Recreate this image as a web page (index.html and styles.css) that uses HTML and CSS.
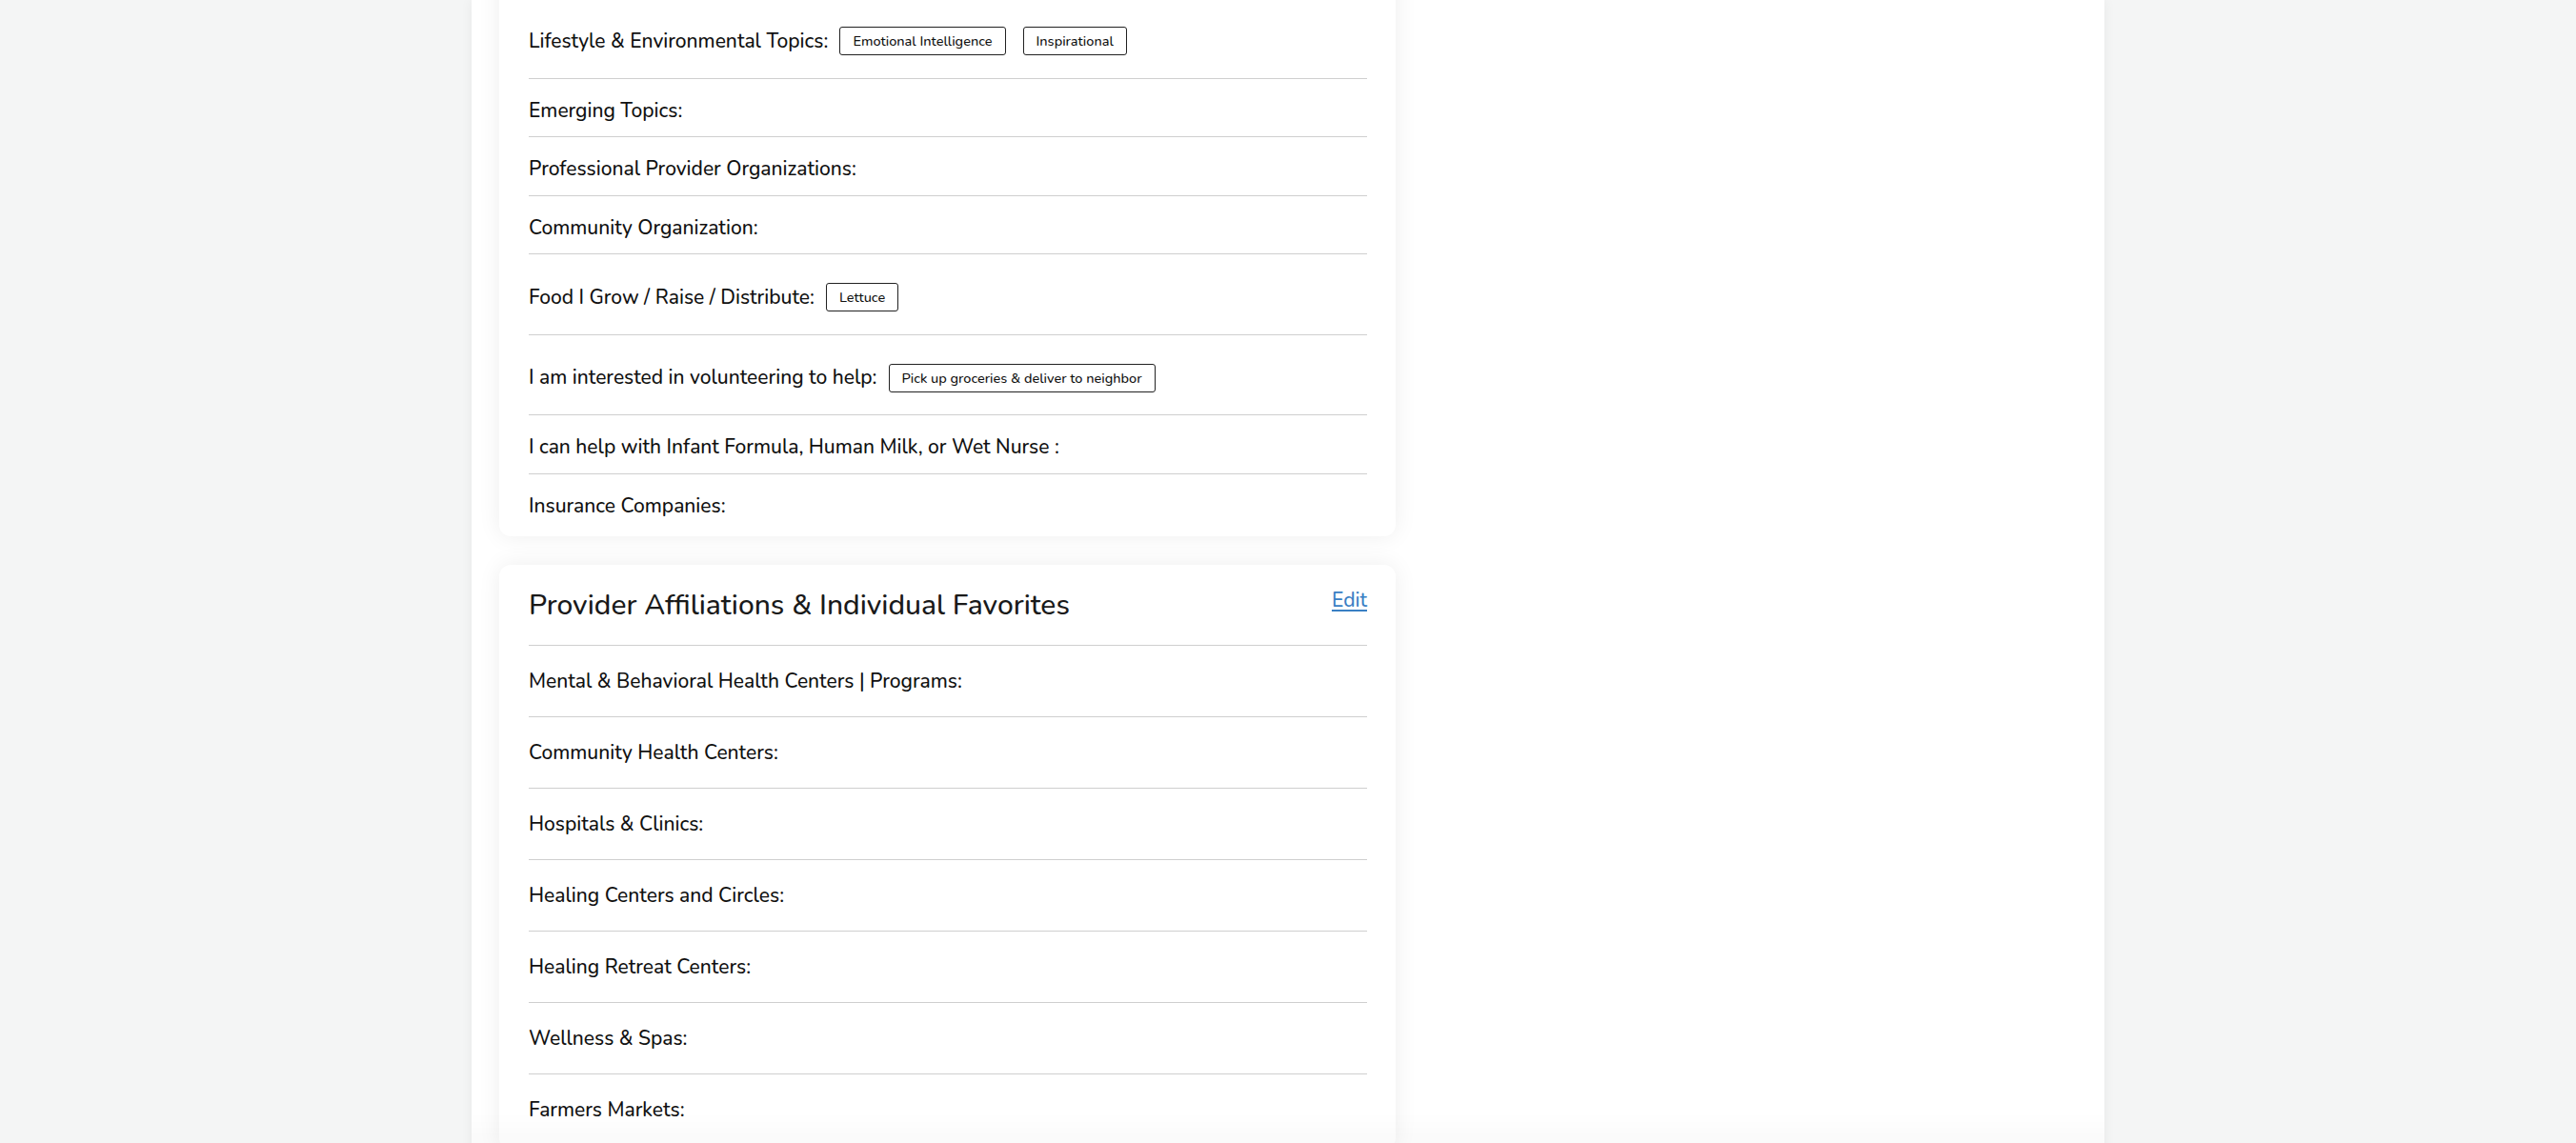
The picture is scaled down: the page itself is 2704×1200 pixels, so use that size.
FILE: index.html
```html
<!DOCTYPE html>
<html lang="en">
<head>
    <meta charset="UTF-8">
    <meta name="viewport" content="width=device-width, initial-scale=1.0">
    <title>Profile - Interests &amp; Affiliations</title>
    <link rel="stylesheet" href="styles.css">
</head>
<body>
    <div class="page">
        <div class="layout">
            <div class="main-col">
                <!-- interests card, upper part scrolled out of view -->
                <section class="card card-continued">
                    <div class="info-row">
                        <span class="info-label">Lifestyle &amp; Environmental Topics:</span>
                        <span class="tag">Emotional Intelligence</span>
                        <span class="tag">Inspirational</span>
                    </div>
                    <div class="info-row">
                        <span class="info-label">Emerging Topics:</span>
                    </div>
                    <div class="info-row">
                        <span class="info-label">Professional Provider Organizations:</span>
                    </div>
                    <div class="info-row">
                        <span class="info-label">Community Organization:</span>
                    </div>
                    <div class="info-row">
                        <span class="info-label">Food I Grow / Raise / Distribute:</span>
                        <span class="tag">Lettuce</span>
                    </div>
                    <div class="info-row">
                        <span class="info-label">I am interested in volunteering to help:</span>
                        <span class="tag">Pick up groceries &amp; deliver to neighbor</span>
                    </div>
                    <div class="info-row">
                        <span class="info-label">I can help with Infant Formula, Human Milk, or Wet Nurse :</span>
                    </div>
                    <div class="info-row">
                        <span class="info-label">Insurance Companies:</span>
                    </div>
                </section>

                <section class="card">
                    <div class="card-header">
                        <h2>Provider Affiliations &amp; Individual Favorites</h2>
                        <a href="#" class="edit-link">Edit</a>
                    </div>
                    <div class="info-row roomy">
                        <span class="info-label">Mental &amp; Behavioral Health Centers | Programs:</span>
                    </div>
                    <div class="info-row roomy">
                        <span class="info-label">Community Health Centers:</span>
                    </div>
                    <div class="info-row roomy">
                        <span class="info-label">Hospitals &amp; Clinics:</span>
                    </div>
                    <div class="info-row roomy">
                        <span class="info-label">Healing Centers and Circles:</span>
                    </div>
                    <div class="info-row roomy">
                        <span class="info-label">Healing Retreat Centers:</span>
                    </div>
                    <div class="info-row roomy">
                        <span class="info-label">Wellness &amp; Spas:</span>
                    </div>
                    <div class="info-row roomy">
                        <span class="info-label">Farmers Markets:</span>
                    </div>
                </section>
            </div>
            <div class="side-col"></div>
        </div>
    </div>
    <div class="bottom-fade"></div>
</body>
</html>
```

FILE: styles.css
```css
body {
    margin: 0;
    background-color: #f4f5f5;
    font-family: "Nunito", "Lato", sans-serif;
    color: #111;
}
.page {
    box-sizing: border-box;
    width: 1714px;
    min-height: 100vh;
    margin: 0 auto;
    padding: 0 29px;
    background-color: #fff;
    box-shadow: 0 0 12px rgba(0, 0, 0, 0.06);
}
.layout {
    display: grid;
    grid-template-columns: 941px 1fr;
}
.card {
    background-color: #fff;
    border-radius: 12px;
    box-shadow: 0 0 24px rgba(0, 0, 0, 0.07);
    padding: 0 30px 5px 31px;
    margin-bottom: 30px;
}
.card-continued {
    margin-top: -40px;
    padding-top: 38px;
}
.card-header {
    display: flex;
    justify-content: space-between;
    align-items: flex-start;
    padding: 24px 0 22px;
    border-bottom: 1px solid #cfcfcf;
}
.card-header h2 {
    margin: 0;
    font-size: 30px;
    line-height: 38px;
    font-weight: 500;
    color: #1a1a1a;
}
.edit-link {
    font-size: 21px;
    line-height: 27px;
    font-weight: 500;
    color: #3a80c4;
    text-decoration: underline;
    text-decoration-thickness: 2px;
    text-underline-offset: 3px;
}
.info-row {
    display: flex;
    align-items: center;
    flex-wrap: wrap;
    padding: 20px 0 13.5px;
    border-bottom: 1px solid #cfcfcf;
    font-size: 21px;
    line-height: 27px;
    font-weight: 500;
}
.info-row:last-child {
    border-bottom: none;
}
.info-row.roomy {
    padding: 24px 0 23px;
}
.tag {
    box-sizing: border-box;
    height: 30px;
    margin: 10px 0 10px 18px;
    padding: 0 13px;
    border: 1px solid #222;
    border-radius: 3px;
    font-size: 14.5px;
    line-height: 28px;
}
.info-label + .tag {
    margin-left: 12px;
}
.bottom-fade {
    position: fixed;
    bottom: 0;
    left: 50%;
    transform: translateX(-50%);
    width: 1714px;
    height: 32px;
    background: linear-gradient(rgba(0, 0, 0, 0), rgba(0, 0, 0, 0.02));
    pointer-events: none;
}
```
